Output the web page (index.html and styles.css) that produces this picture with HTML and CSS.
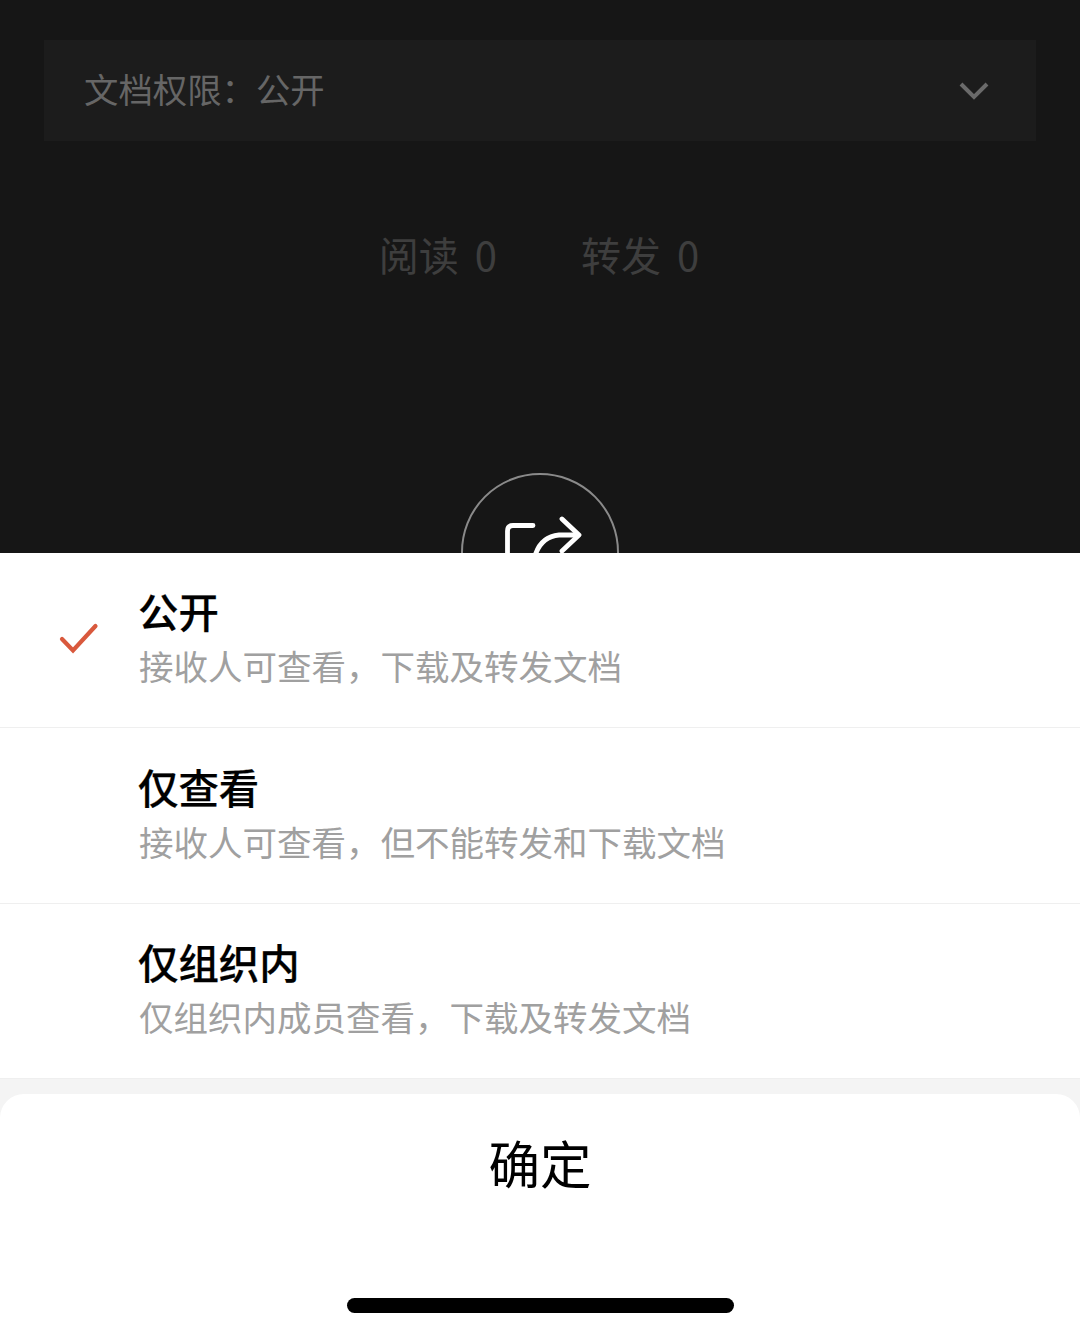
FILE: index.html
```html
<!DOCTYPE html>
<html lang="zh-CN">
<head>
    <meta charset="UTF-8">
    <meta name="viewport" content="width=device-width, initial-scale=1.0">
    <title>文档权限</title>
    <link rel="stylesheet" href="styles.css">
</head>
<body>
    <div class="backdrop">
        <div class="perm-bar">
            <span class="perm-label">文档权限：公开</span>
            <svg class="chevron" width="32" height="22" viewBox="0 0 32 22">
                <path d="M3 4 L16 17 L29 4" fill="none" stroke="#6a6a6a" stroke-width="4"/>
            </svg>
        </div>
        <div class="stats">
            <span>阅读 0</span>
            <span>转发 0</span>
        </div>
        <div class="share-btn">
            <svg width="90" height="60" viewBox="0 0 90 60">
                <path d="M37 10.5 H17 Q11.5 10.5 11.5 16 V50" fill="none" stroke="#fff" stroke-width="4.8" stroke-linecap="round"/>
                <path d="M37 50 Q41 22 63 20 L81 20" fill="none" stroke="#fff" stroke-width="4.8" stroke-linecap="round"/>
                <path d="M66 4 L83 20 L66 36" fill="none" stroke="#fff" stroke-width="4.8" stroke-linecap="round" stroke-linejoin="round"/>
            </svg>
        </div>
    </div>

    <div class="sheet">
        <div class="option">
            <div class="check">
                <svg width="40" height="32" viewBox="0 0 40 32">
                    <path d="M3 16 L14 27.5 L36.5 3" fill="none" stroke="#d9593d" stroke-width="4.2" stroke-linecap="round"/>
                </svg>
            </div>
            <div class="option-text">
                <div class="option-title">公开</div>
                <div class="option-desc">接收人可查看，下载及转发文档</div>
            </div>
        </div>
        <div class="option">
            <div class="check"></div>
            <div class="option-text">
                <div class="option-title">仅查看</div>
                <div class="option-desc">接收人可查看，但不能转发和下载文档</div>
            </div>
        </div>
        <div class="option">
            <div class="check"></div>
            <div class="option-text">
                <div class="option-title">仅组织内</div>
                <div class="option-desc">仅组织内成员查看，下载及转发文档</div>
            </div>
        </div>
        <div class="footer">
            <div class="confirm">确定</div>
            <div class="home-bar"></div>
        </div>
    </div>
</body>
</html>
```

FILE: styles.css
```css
* {
    box-sizing: border-box;
}

html, body {
    margin: 0;
    height: 1336px;
    overflow: hidden;
}

body {
    font-family: "Noto Sans CJK SC", "Noto Sans", sans-serif;
    background: #f4f4f4;
}

.backdrop {
    height: 553px;
    overflow: hidden;
    background: #161616;
    padding: 40px 44px 0;
    display: flex;
    flex-direction: column;
    align-items: center;
}

.perm-bar {
    width: 100%;
    height: 101px;
    flex-shrink: 0;
    background: #1c1c1c;
    padding: 0 46px 0 40px;
    display: flex;
    align-items: center;
    justify-content: space-between;
    color: #666;
    font-size: 34.4px;
}

.perm-label {
    padding-bottom: 6px;
}

.stats {
    margin-top: 63px;
    margin-left: -2px;
    height: 100px;
    flex-shrink: 0;
    display: flex;
    gap: 84px;
    color: #3e3e3e;
    font-size: 40px;
    line-height: 100px;
    word-spacing: 7px;
}

.share-btn {
    margin-top: 169px;
    width: 158px;
    height: 158px;
    flex-shrink: 0;
    border: 2px solid #8a8a8a;
    border-radius: 50%;
    padding: 40px 0 0 33px;
}

.share-btn svg {
    display: block;
}

.sheet {
    background: #f4f4f4;
}

.option {
    height: 175.4px;
    background: #fff;
    border-bottom: 1.5px solid #efefef;
    display: flex;
    align-items: center;
}

.check {
    width: 139px;
    padding-left: 59px;
    flex-shrink: 0;
}

.check svg {
    display: block;
    margin-bottom: 3px;
}

.option-text {
    margin-top: -8px;
}

.option-title {
    margin-left: -1px;
    font-size: 40.4px;
    font-weight: 500;
    -webkit-text-stroke: 0.25px #000;
    line-height: 58px;
    color: #000;
}

.option-desc {
    font-size: 34.5px;
    line-height: 50px;
    color: #a0a0a0;
}

.footer {
    margin-top: 15px;
    height: 243px;
    background: #fff;
    border-radius: 24px 24px 0 0;
    display: flex;
    flex-direction: column;
    align-items: center;
}

.confirm {
    margin-top: 33px;
    font-size: 51.5px;
    line-height: 70px;
    color: #000;
}

.home-bar {
    margin-top: 101px;
    width: 387px;
    height: 15px;
    background: #000;
    border-radius: 8px;
}
```
